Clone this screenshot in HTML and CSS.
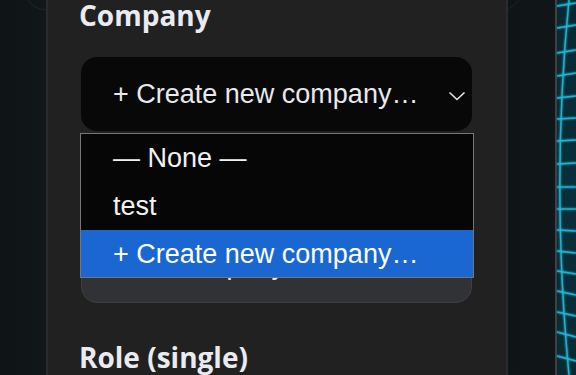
FILE: index.html
```html
<!DOCTYPE html>
<html>
<head>
<title>Contact form</title>
<link rel="stylesheet" href="styles.css">
</head>
<body>

<div class="layout">
  <div class="gutter gutter-left"></div>

  <div class="panel">
    <div class="card-edge"></div>

    <h2 class="field-label">Company</h2>

    <div class="select-wrap">
      <div class="select-box">
        <span class="select-value">+ Create new company…</span>
        <svg class="chevron" width="18" height="10" viewBox="0 0 18 10">
          <path d="M1.5 1.5 L9 8.5 L16.5 1.5" fill="none" stroke="#e6e6e6" stroke-width="1.6"/>
        </svg>
      </div>

      <div class="new-company">
        <span class="new-company-text">New company name</span>
      </div>

      <ul class="select-popup">
        <li class="option">— None —</li>
        <li class="option">test</li>
        <li class="option selected">+ Create new company…</li>
      </ul>
    </div>

    <h2 class="field-label role-label">Role (single)</h2>
  </div>

  <div class="gutter gutter-right"></div>

  <div class="grid-strip">
    <svg width="19" height="375" viewBox="0 0 19 375">
      <g stroke="#22bbdd" stroke-width="1.4" fill="none" opacity="0.9">
        <path d="M12 0 C 0 120, 0 250, 12 375"/>
        <path d="M0 6 L19 3"/>
        <path d="M0 28 L19 25"/>
        <path d="M0 53 L19 50"/>
        <path d="M0 76 L19 73"/>
        <path d="M0 98 L19 96"/>
        <path d="M0 119 L19 118"/>
        <path d="M0 141 L19 140"/>
        <path d="M0 164 L19 163"/>
        <path d="M0 187 L19 187"/>
        <path d="M0 209 L19 209"/>
        <path d="M0 230 L19 231"/>
        <path d="M0 251 L19 253"/>
        <path d="M0 271 L19 274"/>
        <path d="M0 291 L19 295"/>
        <path d="M0 312 L19 316"/>
        <path d="M0 332 L19 337"/>
        <path d="M0 356 L19 361"/>
      </g>
    </svg>
  </div>
</div>

</body>
</html>
```

FILE: styles.css
```css
body {
  margin: 0;
  background: linear-gradient(90deg, #0e1315, #12181a 8%, #0f1416 90%, #12181a);
  font-family: "Liberation Sans", Arial, sans-serif;
  overflow: hidden;
}

.layout {
  display: flex;
  height: 375px;
}

.gutter-left {
  width: 46px;
  flex-shrink: 0;
}

.gutter-right {
  width: 47px;
  flex-shrink: 0;
  border-right: 2px solid #3b4145;
}

.panel {
  position: relative;
  width: 391px;
  flex-shrink: 0;
  padding: 0 34px 0 33px;
  background-color: #212121;
  border-left: 2px solid #2b2b2b;
  border-right: 2px solid #2b2b2b;
}

/* bottom corners of the card above, peeking out behind the panel */
.card-edge {
  position: absolute;
  top: -30px;
  left: -23px;
  right: -16px;
  height: 38px;
  border: 1px solid rgba(255, 255, 255, 0.06);
  border-radius: 24px;
  z-index: -1;
}

.field-label {
  margin: 0 0 0 -2px;
  font-family: "Open Sans", sans-serif;
  font-size: 28px;
  font-weight: 700;
  line-height: 36px;
  color: #e9ebf1;
  white-space: nowrap;
}

.field-label:first-of-type {
  margin-top: -3px;
}

.select-wrap {
  position: relative;
  margin-top: 24px;
}

.select-box {
  display: flex;
  align-items: center;
  height: 74px;
  padding: 0 6px 0 32px;
  background-color: #080808;
  border-radius: 16px;
  font-size: 27px;
  color: #e8e9ef;
}

.select-value {
  flex: 1;
}

.chevron {
  margin-top: 3px;
}

.new-company {
  height: 52px;
  margin-top: 108px;
  padding: 10px 32px 0;
  background-color: #313235;
  border: 1px solid #3f3f42;
  border-radius: 16px;
  font-size: 27px;
  line-height: 31px;
  color: #e8e9ef;
}

.select-popup {
  position: absolute;
  top: 76px;
  left: -1px;
  right: -2px;
  margin: 0;
  padding: 0;
  list-style: none;
  background-color: #060606;
  border: 1px solid #767676;
  font-size: 27px;
  color: #f2f2f2;
}

.option {
  height: 48px;
  line-height: 48px;
  padding-left: 32px;
}

.option.selected {
  background-color: #1a67d2;
  color: #ffffff;
  height: 47px;
}

.role-label {
  margin-top: 36px;
}

.grid-strip {
  flex: 1;
  background: linear-gradient(180deg, #0a2730, #08303a 50%, #0a2a33);
}

.grid-strip svg {
  display: block;
  filter: drop-shadow(0 0 1px #2fd0f0);
}
```
